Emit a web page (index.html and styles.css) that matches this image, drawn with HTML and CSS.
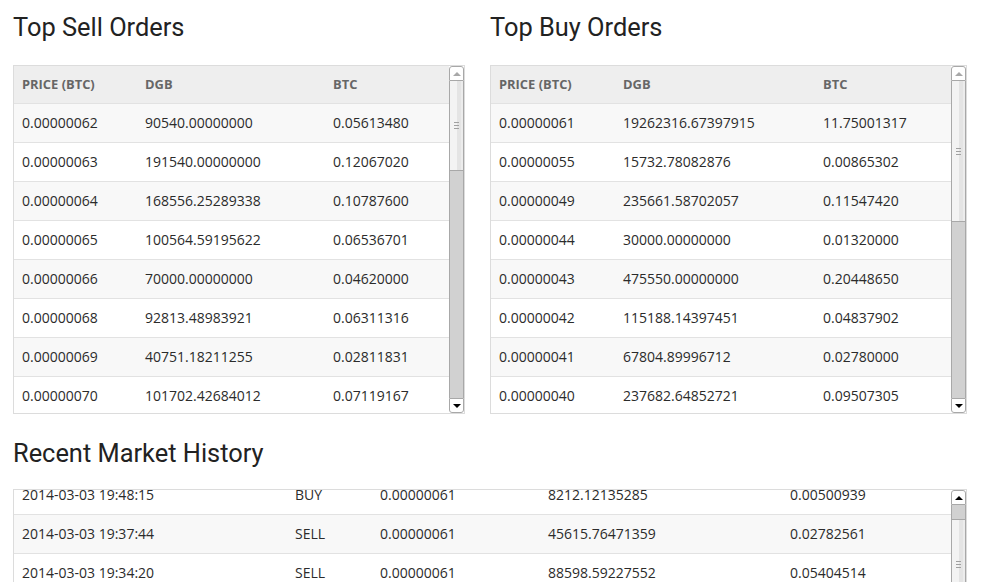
FILE: index.html
```html
<!DOCTYPE html>
<html>
<head>
<meta charset="utf-8">
<link rel="stylesheet" href="styles.css">
</head>
<body>
<div class="page">
  <div class="top">
    <section class="col">
      <h2 class="title">Top Sell Orders</h2>
      <div class="panel panel-top">
        <div class="viewport">
          <div class="thead g-sell"><span>Price (BTC)</span><span>DGB</span><span>BTC</span></div>
          <div class="row g-sell odd"><span>0.00000062</span><span>90540.00000000</span><span>0.05613480</span></div>
          <div class="row g-sell"><span>0.00000063</span><span>191540.00000000</span><span>0.12067020</span></div>
          <div class="row g-sell odd"><span>0.00000064</span><span>168556.25289338</span><span>0.10787600</span></div>
          <div class="row g-sell"><span>0.00000065</span><span>100564.59195622</span><span>0.06536701</span></div>
          <div class="row g-sell odd"><span>0.00000066</span><span>70000.00000000</span><span>0.04620000</span></div>
          <div class="row g-sell"><span>0.00000068</span><span>92813.48983921</span><span>0.06311316</span></div>
          <div class="row g-sell odd"><span>0.00000069</span><span>40751.18211255</span><span>0.02811831</span></div>
          <div class="row g-sell"><span>0.00000070</span><span>101702.42684012</span><span>0.07119167</span></div>
        </div>
        <div class="sb">
          <div class="sb-btn sb-up off"><i></i></div>
          <div class="sb-track">
            <div class="sb-thumb" style="height:90px"><b class="grip"></b></div>
          </div>
          <div class="sb-btn sb-down"><i></i></div>
        </div>
      </div>
    </section>
    <section class="col">
      <h2 class="title">Top Buy Orders</h2>
      <div class="panel panel-top">
        <div class="viewport">
          <div class="thead g-buy"><span>Price (BTC)</span><span>DGB</span><span>BTC</span></div>
          <div class="row g-buy odd"><span>0.00000061</span><span>19262316.67397915</span><span>11.75001317</span></div>
          <div class="row g-buy"><span>0.00000055</span><span>15732.78082876</span><span>0.00865302</span></div>
          <div class="row g-buy odd"><span>0.00000049</span><span>235661.58702057</span><span>0.11547420</span></div>
          <div class="row g-buy"><span>0.00000044</span><span>30000.00000000</span><span>0.01320000</span></div>
          <div class="row g-buy odd"><span>0.00000043</span><span>475550.00000000</span><span>0.20448650</span></div>
          <div class="row g-buy"><span>0.00000042</span><span>115188.14397451</span><span>0.04837902</span></div>
          <div class="row g-buy odd"><span>0.00000041</span><span>67804.89996712</span><span>0.02780000</span></div>
          <div class="row g-buy"><span>0.00000040</span><span>237682.64852721</span><span>0.09507305</span></div>
        </div>
        <div class="sb">
          <div class="sb-btn sb-up off"><i></i></div>
          <div class="sb-track">
            <div class="sb-thumb" style="height:141px"><b class="grip"></b></div>
          </div>
          <div class="sb-btn sb-down"><i></i></div>
        </div>
      </div>
    </section>
  </div>

  <section class="history">
    <h2 class="title">Recent Market History</h2>
    <div class="panel panel-hist">
      <div class="viewport">
        <div class="scrolled">
          <div class="row g-hist"><span>2014-03-03 19:48:15</span><span>BUY</span><span>0.00000061</span><span>8212.12135285</span><span>0.00500939</span></div>
          <div class="row g-hist odd"><span>2014-03-03 19:37:44</span><span>SELL</span><span>0.00000061</span><span>45615.76471359</span><span>0.02782561</span></div>
          <div class="row g-hist"><span>2014-03-03 19:34:20</span><span>SELL</span><span>0.00000061</span><span>88598.59227552</span><span>0.05404514</span></div>
          <div class="row g-hist odd"><span>2014-03-03 19:30:02</span><span>SELL</span><span>0.00000061</span><span>12000.00000000</span><span>0.00732000</span></div>
        </div>
      </div>
      <div class="sb">
        <div class="sb-btn sb-up"><i></i></div>
        <div class="sb-track">
          <div class="sb-gap" style="height:14px"></div>
          <div class="sb-thumb" style="height:90px"><b class="grip"></b></div>
        </div>
        <div class="sb-btn sb-down"><i></i></div>
      </div>
    </div>
  </section>
</div>
</body>
</html>
```

FILE: styles.css
```css
html, body {
  margin: 0;
  padding: 0;
  overflow: hidden;
  background: #fff;
}

body {
  font-family: "Open Sans", "Liberation Sans", sans-serif;
  font-size: 14px;
  color: #2b2b2b;
}

.page {
  padding: 12px 0 0 13px;
  width: 954px;
}

.top {
  display: grid;
  grid-template-columns: 452px 477px;
  column-gap: 25px;
}

.title {
  font-family: Roboto, "Liberation Sans", sans-serif;
  font-weight: 400;
  font-size: 25.4px;
  line-height: 30px;
  color: #222;
  margin: 0 0 23px 0;
}

.history {
  margin-top: 24px;
}

.history .title {
  margin-bottom: 21px;
}

.panel {
  display: flex;
  border: 1px solid #dcdcdc;
  box-sizing: border-box;
  overflow: hidden;
}

.panel-top {
  height: 349px;
}

.panel-hist {
  height: 300px;
  width: 954px;
}

.viewport {
  flex: 1;
  overflow: hidden;
  min-width: 0;
}

.scrolled {
  margin-top: -15px;
}

.thead, .row {
  display: grid;
  align-items: center;
  box-sizing: border-box;
  padding-bottom: 1px;
}

.thead > span, .row > span {
  padding-left: 8px;
  white-space: nowrap;
}

.thead {
  height: 37px;
  background: #eeeeee;
  font-weight: 700;
  font-size: 12.9px;
  color: #666;
  text-transform: uppercase;
}

.row {
  height: 39px;
  border-top: 1px solid #e2e2e2;
  background: #fff;
}

.row.odd {
  background: #f8f8f8;
}

.g-sell { grid-template-columns: 123px 188px 1fr; }
.g-buy { grid-template-columns: 124px 200px 1fr; }
.g-hist { grid-template-columns: 273px 85px 168px 242px 1fr; }

/* scrollbar */
.sb {
  width: 15px;
  flex: none;
  display: flex;
  flex-direction: column;
}

.sb-btn {
  height: 15px;
  flex: none;
  box-sizing: border-box;
  border: 1px solid #a8a8a8;
  background: #fff;
  display: flex;
  align-items: center;
  justify-content: center;
}

.sb-up {
  border-radius: 3px 3px 0 0;
}

.sb-down {
  border-radius: 0 0 3px 3px;
}

.sb-btn i {
  display: block;
  width: 0;
  height: 0;
  border-left: 4px solid transparent;
  border-right: 4px solid transparent;
}

.sb-up i {
  border-bottom: 4px solid #000;
}

.sb-up.off i {
  border-bottom-color: #a8a8a8;
}

.sb-down i {
  border-top: 4px solid #000;
}

.sb-track {
  flex: 1;
  background: #d1d1d1;
  border-left: 1px solid #a8a8a8;
  border-right: 1px solid #a8a8a8;
  display: flex;
  flex-direction: column;
}

.sb-gap {
  flex: none;
  border-bottom: 1px solid #a8a8a8;
}

.sb-thumb {
  flex: none;
  box-sizing: border-box;
  border-bottom: 1px solid #a8a8a8;
  background: linear-gradient(to right, #f3f3f3 0 7px, #e4e4e4 7px 11px, #ececec 11px);
  display: flex;
  align-items: center;
  justify-content: center;
}

.grip {
  display: block;
  width: 5px;
  height: 7px;
  background: linear-gradient(#a0a0a0 0 1px, transparent 1px 3px, #a0a0a0 3px 4px, transparent 4px 6px, #a0a0a0 6px 7px);
}
```
